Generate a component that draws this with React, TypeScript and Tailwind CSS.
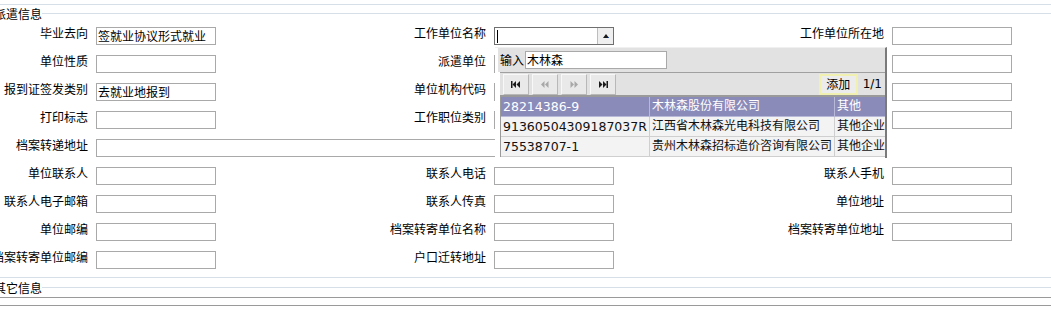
import React from "react";

type Field = { label: string; value?: string; combo?: boolean } | null;

const rowsTop: Field[][] = [
  [{ label: "毕业去向", value: "签就业协议形式就业" }, { label: "工作单位名称", combo: true }, { label: "工作单位所在地" }],
  [{ label: "单位性质" }, { label: "派遣单位" }, { label: "" }],
  [{ label: "报到证签发类别", value: "去就业地报到" }, { label: "单位机构代码" }, { label: "" }],
  [{ label: "打印标志" }, { label: "工作职位类别" }, { label: "" }],
];

const rowsBottom: Field[][] = [
  [{ label: "单位联系人" }, { label: "联系人电话" }, { label: "联系人手机" }],
  [{ label: "联系人电子邮箱" }, { label: "联系人传真" }, { label: "单位地址" }],
  [{ label: "单位邮编" }, { label: "档案转寄单位名称" }, { label: "档案转寄单位地址" }],
  [{ label: "档案转寄单位邮编" }, { label: "户口迁转地址" }, null],
];

const results = [
  { code: "28214386-9", name: "木林森股份有限公司", type: "其他" },
  { code: "91360504309187037R", name: "江西省木林森光电科技有限公司", type: "其他企业" },
  { code: "75538707-1", name: "贵州木林森招标造价咨询有限公司", type: "其他企业" },
];

const NavIcon = ({ kind, active }: { kind: "first" | "prev" | "next" | "last"; active: boolean }) => {
  const c = active ? "#1a1a1a" : "#a8a8a8";
  return (
    <svg width="10" height="7" viewBox="0 0 10 7">
      {kind === "first" && (
        <>
          <rect x="0" y="0" width="1.5" height="7" fill={c} />
          <polygon points="5,0 1.5,3.5 5,7" fill={c} />
          <polygon points="9,0 5.5,3.5 9,7" fill={c} />
        </>
      )}
      {kind === "prev" && (
        <>
          <polygon points="4.5,0 1,3.5 4.5,7" fill={c} />
          <polygon points="8.5,0 5,3.5 8.5,7" fill={c} />
        </>
      )}
      {kind === "next" && (
        <>
          <polygon points="1.5,0 5,3.5 1.5,7" fill={c} />
          <polygon points="5.5,0 9,3.5 5.5,7" fill={c} />
        </>
      )}
      {kind === "last" && (
        <>
          <polygon points="1,0 4.5,3.5 1,7" fill={c} />
          <polygon points="5,0 8.5,3.5 5,7" fill={c} />
          <rect x="8.5" y="0" width="1.5" height="7" fill={c} />
        </>
      )}
    </svg>
  );
};

const Popup = () => (
  <div className="absolute left-0 top-[19px] z-10 w-[392px] h-[111px] overflow-hidden bg-white border-t border-[#f0f0f0] border-r-2 border-r-[#7a7a7a] pl-[3px]">
    <div className="bg-[#e2e2e2] h-[24px] flex items-center pl-[2px]">
      <span className="text-[12px] leading-[14px]">输入</span>
      <div className="ml-[1px] w-[142px] h-[18px] bg-white border border-[#a9a9a9] text-[12px] leading-[16px] pl-[1px]">木林森</div>
    </div>
    <div className="ml-[2px] bg-[#e2e2e2] border-t border-[#a0a0a0] border-b-2 border-b-[#9a9a9a] h-[25px] flex items-center pl-[3px] pr-[3px]">
      <div className="flex gap-[3px]">
        {(["first", "prev", "next", "last"] as const).map((k) => (
          <div
            key={k}
            className="w-[26px] h-[21px] flex items-center justify-center bg-[#e9e9e9] border border-t-[#f8f8f8] border-l-[#f8f8f8] border-r-[#b8b8b8] border-b-[#b8b8b8]"
          >
            <NavIcon kind={k} active={k === "first" || k === "last"} />
          </div>
        ))}
      </div>
      <div className="flex-1" />
      <div className="w-[39px] h-[21px] flex items-center justify-center bg-[#ececec] border-2 border-[#f0f0b0] text-[12px]">添加</div>
      <span className="ml-[5px] text-[12px] font-['DejaVu_Sans',sans-serif]">1/1</span>
    </div>
    <div className="ml-[2px] border-l border-[#9a9a9a]">
      {results.map((r, i) => (
        <div
          key={r.code}
          className={`flex h-[20px] border-b ${i === 0 ? "bg-[#8b8bba] text-white border-[#b8b8d8]" : "bg-[#f3f3f3] text-[#111] border-[#cfcfcf]"} text-[12.5px] leading-[19px] font-['DejaVu_Sans','Noto_Sans_CJK_SC',sans-serif]`}
        >
          <div className={`w-[149px] pl-[2px] border-r ${i === 0 ? "border-[#b8b8d8]" : "border-[#cfcfcf]"} whitespace-nowrap overflow-hidden`}>{r.code}</div>
          <div className={`w-[185px] pl-[2px] border-r ${i === 0 ? "border-[#b8b8d8]" : "border-[#cfcfcf]"} whitespace-nowrap overflow-hidden text-[12px]`}>{r.name}</div>
          <div className="flex-1 pl-[2px] whitespace-nowrap overflow-hidden text-[12px]">{r.type}</div>
        </div>
      ))}
    </div>
  </div>
);

const Cell = ({ f }: { f: Field }) => {
  if (!f) return (<><div /><div /></>);
  return (
    <>
      <div className="flex items-center justify-end whitespace-nowrap pb-[6px] text-[12px] leading-[14px] text-black">{f.label}</div>
      <div className="flex items-center">
        {f.combo ? (
          <div className="relative ml-[8px] w-[120px] h-[18px] border border-[#6f6f6f] bg-white flex">
            <div className="flex-1 flex items-center pl-[2px]">
              <div className="w-px h-[13px] bg-black" />
            </div>
            <div className="w-[16px] h-full bg-[#efefef] border-l border-[#bdbdbd] flex items-center justify-center">
              <svg width="6" height="4" viewBox="0 0 6 4">
                <polygon points="3,0 6,4 0,4" fill="#1a1a1a" />
                <rect x="0" y="3" width="1" height="1" fill="#d04020" />
                <rect x="5" y="3" width="1" height="1" fill="#2050c0" />
              </svg>
            </div>
            <Popup />
          </div>
        ) : (
          <div className="ml-[8px] w-[120px] h-[18px] border border-[#a9a9a9] bg-white text-[12px] leading-[16px] pl-[1px] whitespace-nowrap overflow-hidden">
            {f.value ?? ""}
          </div>
        )}
      </div>
    </>
  );
};

export default function App() {
  return (
    <div className="w-[1051px] h-[310px] overflow-hidden bg-white font-['Noto_Sans_CJK_SC','Noto_Sans',sans-serif]">
      <div className="h-[4px]" />
      <div className="h-px bg-[#d6dfe7]" />
      <div className="h-[17px] flex items-center">
        <span className="-ml-[6px] text-[12px] leading-[14px] text-black whitespace-nowrap">派遣信息</span>
        <div className="flex-1 h-px bg-[#d6dfe7]" />
      </div>

      <div className="grid grid-cols-[88px_310px_88px_310px_88px_1fr] auto-rows-[28px]">
        {rowsTop.map((row, i) => (
          <React.Fragment key={i}>
            {row.map((f, j) => (
              <Cell key={j} f={f} />
            ))}
          </React.Fragment>
        ))}
        <div className="flex items-center justify-end whitespace-nowrap pb-[6px] text-[12px] leading-[14px] text-black">档案转递地址</div>
        <div className="col-span-5 flex items-center">
          <div className="ml-[8px] w-[780px] h-[18px] border border-[#a9a9a9] bg-white" />
        </div>
        {rowsBottom.map((row, i) => (
          <React.Fragment key={"b" + i}>
            {row.map((f, j) => (
              <Cell key={j} f={f} />
            ))}
          </React.Fragment>
        ))}
      </div>

      <div className="h-[3px]" />
      <div className="h-px bg-[#d6dfe7]" />
      <div className="h-[19px] flex items-center">
        <span className="-ml-[6px] text-[12px] leading-[14px] text-black whitespace-nowrap">其它信息</span>
        <div className="flex-1 h-px bg-[#d6dfe7]" />
      </div>
      <div className="h-px bg-[#9a9a9a]" />
      <div className="h-[7px]" />
      <div className="h-px bg-[#9a9a9a]" />
    </div>
  );
}
